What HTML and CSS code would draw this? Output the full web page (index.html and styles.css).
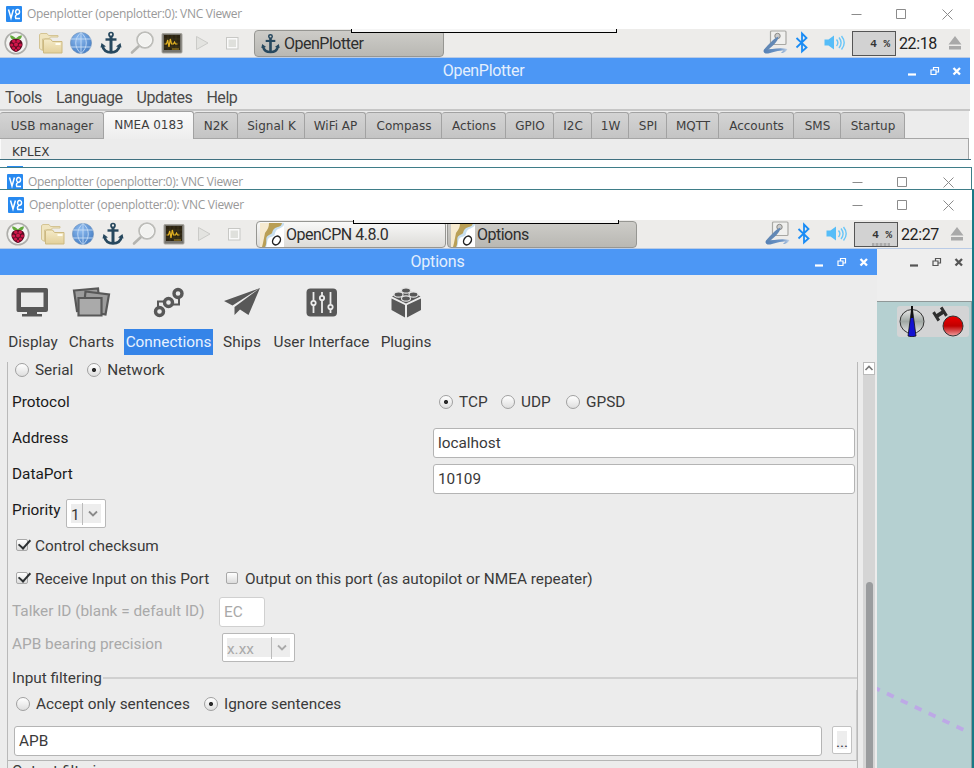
FILE: index.html
```html
<!DOCTYPE html>
<html lang="en">
<head>
<meta charset="utf-8">
<title>Openplotter</title>
<link rel="stylesheet" href="styles.css">
</head>
<body>
<svg class="defs" width="0" height="0">
  <defs>
    <linearGradient id="gFold" x1="0" y1="0" x2="0" y2="1"><stop offset="0" stop-color="#f5ebc9"/><stop offset="1" stop-color="#e3d09a"/></linearGradient>
    <radialGradient id="gGlobe" cx=".4" cy=".3" r=".8"><stop offset="0" stop-color="#8fbcf0"/><stop offset="1" stop-color="#3f78c0"/></radialGradient>
    <linearGradient id="gRed" x1="0" y1="0" x2="0" y2="1"><stop offset="0" stop-color="#e00"/><stop offset=".5" stop-color="#c00000"/><stop offset="1" stop-color="#f0a0a0"/></linearGradient>
    <linearGradient id="gDial" x1="0" y1="0" x2="0" y2="1"><stop offset="0" stop-color="#e8e8e8"/><stop offset=".5" stop-color="#a0a8a4"/><stop offset="1" stop-color="#e8e8e8"/></linearGradient>
    <linearGradient id="gSwoop" x1="0" y1="0" x2="1" y2="0"><stop offset="0" stop-color="#5580b4"/><stop offset=".7" stop-color="#6f97c8"/><stop offset="1" stop-color="#c4d4e8"/></linearGradient>
  </defs>
  <symbol id="vnc" viewBox="0 0 16 16"><rect width="16" height="16" rx="1" fill="#2789f0"/><path d="M2.500 3.500 5 12l2.400-8.500M14 12.500H9.800C9 10 9.600 9 11.500 8.400M12 8.200c2-.7 2.200-4 .2-4.600-2.200-.5-3 1.500-2.300 3.400.4 1 1.300 1.400 2.100 1.200Z" fill="none" stroke="#fff" stroke-width="1.500"/></symbol>
  <symbol id="rasp" viewBox="0 0 24 28"><circle cx="12" cy="14" r="10.800" fill="#f4f4f2" stroke="#aeaeaa" stroke-width="1.600"/><path d="M12 9.500C9 6 6 6.500 6 6.500c.2 3.500 3 4.700 6 4 3 .7 5.800-.5 6-4 0 0-3-.5-6 3Z" fill="#63a83c"/><path d="M12 10c4-.5 6.800 2 6.600 5.500C18.300 19.500 14.500 22.700 12 23 9.500 22.700 5.700 19.500 5.400 15.500 5.200 12 8 9.500 12 10Z" fill="#5c0c24"/><g fill="#d2164a"><circle cx="9.800" cy="12.200" r="1.700"/><circle cx="14.200" cy="12.200" r="1.700"/><circle cx="12" cy="15.500" r="2"/><circle cx="7.700" cy="16" r="1.600"/><circle cx="16.300" cy="16" r="1.600"/><circle cx="9.600" cy="19" r="1.600"/><circle cx="14.400" cy="19" r="1.600"/><circle cx="12" cy="21" r="1.200"/></g></symbol>
  <symbol id="folders" viewBox="0 0 24 28"><path d="M.5 5.500v14l3 2V10h6l2-2H19V6.500H9.500L8 4.500H2Z" fill="#f0e5c0" stroke="#d4c494"/><path d="M4.500 24V11l1-1h6l2 2.500h9.500V24Z" fill="url(#gFold)" stroke="#cdb980"/><path d="M16.500 15h5" stroke="#fffdf0" stroke-width="2"/></symbol>
  <symbol id="globe" viewBox="0 0 24 28"><circle cx="12" cy="14" r="10.600" fill="url(#gGlobe)" stroke="#7393b8" stroke-width=".6"/><path d="M2 10h20M2 18h20M12 3.500v21M12 3.500c-7 6-7 15 0 21M12 3.500c7 6 7 15 0 21" fill="none" stroke="#c6dcf5" stroke-width=".9"/></symbol>
  <symbol id="anchor" viewBox="0 0 24 28"><g fill="none" stroke="#27485e"><circle cx="12" cy="5.500" r="2" stroke-width="1.700"/><path d="M12 7v16" stroke-width="3"/><path d="M6.500 10.500h11" stroke-width="2.400"/><path d="M3.500 17c1 4.500 4 6.300 8.500 6.300s7.500-1.800 8.500-6.300" stroke-width="2.800"/></g><path d="M1.500 18.500 2.500 14l4.500 3.500ZM22.500 18.500l-1-4.500-4.500 3.500Z" fill="#27485e"/></symbol>
  <symbol id="mag" viewBox="0 0 24 28"><path d="m9 17-7 6.500" stroke="#b4b4b0" stroke-width="2.600" stroke-linecap="round"/><circle cx="15" cy="11" r="7.800" fill="#f2f2f0" stroke="#bdbdb9" stroke-width="2"/><circle cx="15" cy="11" r="6.600" fill="none" stroke="#fff" stroke-width=".7"/></symbol>
  <symbol id="mon" viewBox="0 0 24 28"><rect x="2" y="4.500" width="20" height="19.500" rx="1" fill="#77756e" stroke="#a7a59e"/><rect x="4" y="6" width="16" height="15" fill="#2c2412"/><path d="M4 10h16M4 14h16M4 18h16M8 6v15M12 6v15M16 6v15" stroke="#4a4020" stroke-width=".5"/><path d="M4.500 15h2l1.200-4 1.300 7 1.300-8 1.200 5h2l1-2 1 2h2" fill="none" stroke="#e6b422" stroke-width="1.200"/><path d="M12 20h7" stroke="#b08c20"/></symbol>
  <symbol id="play" viewBox="0 0 24 28"><path d="M6.500 7.500v13L18 14Z" fill="#e3e3e0" stroke="#cbcbc8"/></symbol>
  <symbol id="stop" viewBox="0 0 24 28"><rect x="6.500" y="8.500" width="11.500" height="11.500" fill="#fafafa" stroke="#c8c8c5"/><rect x="8.500" y="10.500" width="7.500" height="7.500" fill="#dfe0dc"/></symbol>
  <symbol id="tool" viewBox="0 0 26 28"><rect x="8.500" y="2" width="15.500" height="13.500" rx="1" fill="#f0f0ee" stroke="#a8a8a4" stroke-width="1.200"/><circle cx="15.500" cy="7" r="2.700" fill="#ccc" stroke="#8a8a86"/><path d="M16.500 7.500C11 10 7 15 2 20.500L4 22.500C10 17.500 16 13 16.500 7.500Z" fill="#6288b5"/><path d="M2 20.500C9 20.500 18 18 25.500 20c-1.500 3-4.500 4.500-6.500 4l2.500-2.500C14 21 9 25 3.500 24.500c-2-.8-2.500-2.500-1.500-4Z" fill="url(#gSwoop)"/></symbol>
  <symbol id="bt" viewBox="0 0 14 28"><path d="m1.500 9 10 9.500L7 22.500v-18l4.500 4.500-10 9.500" fill="none" stroke="#1a8cf5" stroke-width="1.800"/></symbol>
  <symbol id="spk" viewBox="0 0 22 28"><path d="M.5 10.500h4L10 6.500v14l-5.500-4h-4Z" fill="#56bdf8"/><path d="M12.500 10.500c1.700 2 1.700 4.500 0 6.500M15 8.500c2.800 3.500 2.800 7 0 10.500M17.500 7c3.600 4.500 3.600 9 0 13.500" fill="none" stroke="#6ac6f8" stroke-width="1.400"/></symbol>
  <symbol id="eject" viewBox="0 0 14 28"><path d="m7 7 6.500 8.500H.5Z M1 17h12v3.500H1Z" fill="#a9a9a9"/></symbol>
  <symbol id="ocpn" viewBox="0 0 24 24"><rect width="24" height="24" fill="#fff"/><path d="M0 0h24v2c-3 4-6 3-8 6s0 5-5 6-3 6-5 10H2L0 12Z" fill="#c8dff0"/><path d="M0 0h22c-1 5-5 3-8 6s0 4-5 6-1 7-4 12H2L0 12Z" fill="#b99f56"/><path d="M0 0h9c0 4-1 6-4 10L3 20l-1 4H0Z" fill="#f6ead0"/><ellipse cx="16.500" cy="17.500" rx="3.600" ry="4.700" transform="rotate(32 16.500 17.500)" fill="#fff" stroke="#222" stroke-width="1.500"/></symbol>
  <symbol id="ctl" viewBox="0 0 56 12"><path d="M1 9.500h8" stroke="currentColor" stroke-width="2.200"/><path d="M26.500 5V2.500h5V7h-2M24 5h5v4.500h-5Z" fill="none" stroke="currentColor" stroke-width="1.200"/><path d="m46.500 3 6.500 6.500M53 3 46.500 9.500" stroke="currentColor" stroke-width="2.300"/></symbol>
  <symbol id="wbtn" viewBox="0 0 102 12"><path d="M.5 6.500h10M45.500 1.500h9v9h-9ZM91.500 1.500l10 10M101.500 1.500l-10 10" fill="none" stroke="#8b8b8b"/></symbol>
</svg>

<section class="win win-a">
  <header class="vnc-title"><svg width="16" height="16"><use href="#vnc"/></svg><span>Openplotter (openplotter:0): VNC Viewer</span><svg class="wbtns"><use href="#wbtn"/></svg></header>
  <div class="taskbar">
    <div class="launch"><svg><use href="#rasp"/></svg><svg><use href="#folders"/></svg><svg><use href="#globe"/></svg><svg><use href="#anchor"/></svg><svg><use href="#mag"/></svg><svg><use href="#mon"/></svg><svg><use href="#play"/></svg><svg><use href="#stop"/></svg></div>
    <div class="task on"><svg class="anc"><use href="#anchor"/></svg><span>OpenPlotter</span></div>
    <div class="notch"></div>
    <div class="tray"><svg class="t-tool"><use href="#tool"/></svg><svg class="t-bt"><use href="#bt"/></svg><svg class="t-spk"><use href="#spk"/></svg><div class="cpu">4 %</div><span class="clock">22:18</span><svg class="t-ej"><use href="#eject"/></svg></div>
  </div>
  <div class="bluebar"><span>OpenPlotter</span><svg class="ctl"><use href="#ctl"/></svg></div>
  <nav class="menu"><span>Tools</span><span>Language</span><span>Updates</span><span>Help</span></nav>
  <div class="tabs">
    <div class="tab w104">USB manager</div><div class="tab w90 active">NMEA 0183</div><div class="tab w44">N2K</div><div class="tab w67">Signal K</div><div class="tab w61">WiFi AP</div><div class="tab w76">Compass</div><div class="tab w64">Actions</div><div class="tab w48">GPIO</div><div class="tab w38">I2C</div><div class="tab w37">1W</div><div class="tab w38">SPI</div><div class="tab w52">MQTT</div><div class="tab w75">Accounts</div><div class="tab w47">SMS</div><div class="tab w64">Startup</div>
  </div>
  <div class="kplex">KPLEX</div>
</section>

<div class="sliver"><i></i></div>

<section class="win win-b">
  <header class="vnc-title"><svg width="16" height="16"><use href="#vnc"/></svg><span>Openplotter (openplotter:0): VNC Viewer</span><svg class="wbtns"><use href="#wbtn"/></svg></header>
</section>

<section class="win win-c">
  <header class="vnc-title"><svg width="16" height="16"><use href="#vnc"/></svg><span>Openplotter (openplotter:0): VNC Viewer</span><svg class="wbtns"><use href="#wbtn"/></svg></header>
  <div class="taskbar">
    <div class="launch"><svg><use href="#rasp"/></svg><svg><use href="#folders"/></svg><svg><use href="#globe"/></svg><svg><use href="#anchor"/></svg><svg><use href="#mag"/></svg><svg><use href="#mon"/></svg><svg><use href="#play"/></svg><svg><use href="#stop"/></svg></div>
    <div class="task"><svg class="oc"><use href="#ocpn"/></svg><span>OpenCPN 4.8.0</span></div>
    <div class="task on"><svg class="oc"><use href="#ocpn"/></svg><span>Options</span></div>
    <div class="notch"></div>
    <div class="tray"><svg class="t-tool"><use href="#tool"/></svg><svg class="t-bt"><use href="#bt"/></svg><svg class="t-spk"><use href="#spk"/></svg><div class="cpu busy">4 %</div><span class="clock">22:27</span><svg class="t-ej"><use href="#eject"/></svg></div>
  </div>
  <div class="body">
    <div class="options">
      <div class="bluebar"><span>Options</span><svg class="ctl"><use href="#ctl"/></svg></div>
      <div class="tools">
        <div class="tool"><svg viewBox="0 0 40 36"><path d="M5.500 4h27A2 2 0 0 1 35 6v20a2 2 0 0 1-2 2h-27A2 2 0 0 1 3.500 26V6a2 2 0 0 1 2-2ZM8 8.500v14.500h22.500V8.500Z" fill="#585858" fill-rule="evenodd"/><path d="M14 28h10v2h5v2.500H9V30h5Z" fill="#585858"/></svg><span>Display</span></div>
        <div class="tool"><svg viewBox="0 0 40 36"><g fill="#9c9c9c" stroke="#585858" stroke-width="2.200"><path d="m2 6.500 24-2 2 20-23 2.500Z"/><path d="m13.500 7.500 23.500 3-3.500 20-22-4Z"/><path d="M6.500 14h23v17.500h-23Z" fill="#aaa"/></g></svg><span>Charts</span></div>
        <div class="tool sel"><svg viewBox="0 0 40 36"><g fill="none" stroke="#585858" stroke-width="3.400"><circle cx="10.500" cy="27.500" r="4"/><circle cx="19.500" cy="18.500" r="4"/><circle cx="29" cy="9.500" r="4"/></g><path d="M9 23v-5.500h7M24 20.500h6v-7" fill="none" stroke="#585858" stroke-width="2"/></svg><span>Connections</span></div>
        <div class="tool"><svg viewBox="0 0 40 36"><path d="M38 4 2 17l8.500 4.500ZM38 4 12.500 23v8l5.500-5.500 8.500 5.500Z" fill="#585858"/></svg><span>Ships</span></div>
        <div class="tool"><svg viewBox="0 0 40 36"><rect x="4.500" y="4.500" width="30.500" height="28" rx="4" fill="#585858"/><g stroke="#ececec" stroke-width="1.800" fill="#585858"><path d="M11.500 8v21M20 8v21M28.500 8v21"/><circle cx="11.500" cy="19" r="2.200"/><circle cx="20" cy="14" r="2.200"/><circle cx="28.500" cy="23" r="2.200"/></g></svg><span>User Interface</span></div>
        <div class="tool"><svg viewBox="0 0 40 36"><path d="M5.500 14.500 19 21v12.500L5.500 26ZM35 14.500 21 21v12.500L35 26Z" fill="#585858"/><path d="m6 12.500 14-7.500 14.500 7.500L20 19.500Z" fill="#585858"/><g fill="#585858" stroke="#e4e4e4" stroke-width="1.100"><ellipse cx="20" cy="6.500" rx="4.500" ry="2.600"/><ellipse cx="12.500" cy="10.500" rx="4.500" ry="2.600"/><ellipse cx="27.500" cy="10.500" rx="4.500" ry="2.600"/><ellipse cx="20" cy="14.500" rx="4.500" ry="2.600"/></g></svg><span>Plugins</span></div>
      </div>
      <div class="scroller">
        <form class="form">
          <div class="row r-type"><i class="radio"></i><span>Serial</span><i class="radio on g1"></i><span>Network</span></div>
          <div class="row r-proto"><label>Protocol</label><i class="radio on"></i><span class="wtcp">TCP</span><i class="radio"></i><span class="wudp">UDP</span><i class="radio"></i><span>GPSD</span></div>
          <div class="row r-field"><label>Address</label><div class="input">localhost</div></div>
          <div class="row r-field"><label>DataPort</label><div class="input">10109</div></div>
          <div class="row r-prio"><label>Priority</label><div class="combo small"><b>1</b><svg viewBox="0 0 10 8"><path d="m1 1.500 4 4 4-4" fill="none" stroke="#8a8a8a" stroke-width="1.800"/></svg></div></div>
          <div class="row r-check"><i class="check on"></i><span>Control checksum</span></div>
          <div class="row r-recv"><i class="check on"></i><span class="wrecv">Receive Input on this Port</span><i class="check"></i><span>Output on this port (as autopilot or NMEA repeater)</span></div>
          <div class="row r-talk dim"><label>Talker ID (blank = default ID)</label><div class="input">EC</div></div>
          <div class="row r-apb dim"><label>APB bearing precision</label><div class="combo"><b>x.xx</b><svg viewBox="0 0 10 8"><path d="m1 1.500 4 4 4-4" fill="none" stroke="#aaa" stroke-width="1.800"/></svg></div></div>
          <div class="group">
            <div class="legend"><span>Input filtering</span></div>
            <div class="gbody">
              <div class="row r-filt"><i class="radio"></i><span class="wacc">Accept only sentences</span><i class="radio on"></i><span>Ignore sentences</span></div>
              <div class="row r-apbin"><div class="input">APB</div><div class="more">...</div></div>
            </div>
          </div>
          <div class="row r-out">Output filtering</div>
        </form>
        <div class="bar"><svg viewBox="0 0 12 13"><rect x=".5" y=".5" width="11" height="12" fill="#fff" stroke="#bbb"/><path d="m2.500 8 3.500-3.500L9.500 8" fill="none" stroke="#777" stroke-width="1.600"/></svg><div class="thumb"></div></div>
      </div>
    </div>
    <div class="chart">
      <div class="chart-head"><svg class="ctl"><use href="#ctl"/></svg></div>
      <div class="sea">
        <svg class="gauge" viewBox="0 0 72 31"><rect width="72" height="31" rx="3" fill="#d3d4d5"/><circle cx="15" cy="15.500" r="12" fill="url(#gDial)" stroke="#333"/><path d="M15 0 11 30q4 1.500 8 0Z" fill="#1212d0" stroke="#111" stroke-width=".8"/><path d="M15 0v12" stroke="#111" stroke-width="2"/><g transform="rotate(-32 43 8)" fill="#2f2f2f"><path d="M37 3h3v3h6V3h3v10h-3v-3h-6v3h-3Z"/></g><circle cx="56" cy="20" r="10" fill="url(#gRed)" stroke="#333"/></svg>
        <svg class="route" viewBox="0 0 94 50"><path d="M-4 0 88 43.500" fill="none" stroke="#bda9e6" stroke-width="3.800" stroke-dasharray="7.500 7.900"/></svg>
      </div>
    </div>
  </div>
</section>
</body>
</html>
```
FILE: styles.css
```css
* { box-sizing: border-box; }
body { margin: 0; width: 974px; height: 768px; overflow: hidden; background: #fff; font: 15.35px/18px Roboto, sans-serif; color: #3a3a3a; }
svg { display: block; flex: none; }
.defs { position: absolute; }
i, b { font-style: normal; font-weight: 400; }
span, label { white-space: nowrap; }

.vnc-title { display: flex; align-items: center; padding: 0 0 2px 6px; height: 29px; background: #fff; font: 12px/16px "Open Sans", sans-serif; letter-spacing: -.29px; color: #999; }
.vnc-title span { margin-left: 5px; }
.wbtns { width: 102px; height: 12px; margin-left: auto; margin-right: 18px; }

.taskbar { position: relative; display: flex; height: 29px; background: #edecea; border-bottom: 1px solid #b9cbe6; }
.launch { display: flex; width: 254px; padding-left: 4px; }
.launch svg { width: 24px; height: 28px; margin-right: 6.2px; }
.launch svg:first-child { margin-right: 11px; }
.task { display: flex; align-items: center; width: 190px; height: 27px; margin-top: 1px; padding-left: 5px; border: 1px solid #969692; border-radius: 4px; background: linear-gradient(#f9f9f8, #dcdbd8); font-size: 16px; letter-spacing: -.5px; color: #2e2e2e; }
.task.on { background: linear-gradient(#cdccc8, #b9b8b3); }
.anc { width: 21px; height: 26px; }
.oc { width: 24px; height: 24px; }
.anc + span { margin-left: 3px; }
.oc + span { margin-left: 2px; }
.notch { position: absolute; left: 351px; top: 0; width: 266px; height: 4px; background: #f6f6f6; border: solid #000; border-width: 0 1px 1px; }
.tray { display: flex; width: 208px; margin-left: auto; }
.t-tool { width: 26px; height: 28px; margin-right: 7px; }
.t-bt { width: 14px; height: 28px; margin-right: 15px; }
.t-spk { width: 22px; height: 28px; margin-right: 6px; }
.cpu { width: 44px; height: 25px; margin-top: 2px; padding-right: 5px; border: 1px solid #555; background: #d2d2d2; font: bold 11px/24px "Liberation Mono", monospace; text-align: right; color: #333; }
.cpu.busy { background: repeating-linear-gradient(90deg, #aaa 0 2px, #c2c2c2 2px 4px) 17px 100% / 18px 3px no-repeat #d2d2d2; }
.clock { width: 52px; padding-left: 3px; font-size: 16px; line-height: 29px; letter-spacing: -.4px; color: #222; }
.t-ej { width: 14px; height: 28px; }

.bluebar { position: relative; display: flex; justify-content: center; height: 26px; background: #4c97f5; color: #e4effd; font-size: 16px; line-height: 26px; letter-spacing: -.35px; }
.ctl { width: 56px; height: 12px; }
.bluebar .ctl { position: absolute; right: 7px; top: 7px; color: #fff; }

.win-a { width: 971px; height: 160px; border-bottom: 1px solid #3f7080; }
.win-a .taskbar, .win-a .bluebar, .win-a .menu { width: 970px; }
.win-a .bluebar { padding-right: 3px; letter-spacing: -.3px; }
.menu { display: flex; gap: 14px; height: 27px; padding: 4px 0 0 5px; background: #ececec; border-bottom: 2px solid #c6c6c6; font-size: 16px; line-height: 19px; letter-spacing: -.45px; color: #4a4a4a; }
.tabs { display: flex; align-items: flex-end; width: 969px; height: 28px; background: #ececec; border-bottom: 1px solid #a6a6a6; }
.tab { height: 26px; border: solid #a2a2a2; border-width: 1px 1px 0 0; border-radius: 3px 3px 0 0; background: linear-gradient(#d4d4d4, #c4c4c4); font: 12px/27px "DejaVu Sans", sans-serif; text-align: center; white-space: nowrap; padding-left: 1px; color: #3e3e3e; }
.tab.active { height: 28px; margin-bottom: -1px; background: linear-gradient(#fbfbfb, #ededed); }
.w104 { width: 104px; } .w90 { width: 90px; } .w44 { width: 44px; } .w67 { width: 67px; } .w61 { width: 61px; }
.w76 { width: 76px; } .w64 { width: 64px; } .w48 { width: 48px; } .w38 { width: 38px; } .w37 { width: 37px; }
.w52 { width: 52px; } .w75 { width: 75px; } .w47 { width: 47px; }
.kplex { width: 969px; height: 20px; padding: 4px 0 0 11px; background: #ececec; border-left: 1px solid #fafafa; border-right: 1px solid #a6a6a6; font: 12px/19px "DejaVu Sans", sans-serif; }

.sliver { height: 7px; padding: 6px 0 0 7px; }
.sliver i { display: block; width: 16px; height: 1px; background: #2789f0; }
.win-b { width: 972px; height: 22px; border: 1px solid #3f7d88; border-width: 1px 1px 0 0; overflow: hidden; }
.win-b .vnc-title { padding-left: 7px; }
.win-b .wbtns { margin-right: 17px; }
.win-c { width: 974px; border-top: 1px solid #3f7d88; background: #197a86; }
.win-c .vnc-title { width: 972px; height: 30px; padding-left: 8px; padding-bottom: 1px; }
.win-c .taskbar { width: 972px; }
.win-c .launch { width: 256px; padding-left: 6px; }
.win-c .task { margin-right: 1px; padding-left: 3px; }
.win-c .notch { left: 353px; }

.body { display: flex; height: 519px; }
.options { width: 877px; background: #ececec; }
.body .bluebar { padding-right: 2px; letter-spacing: -.2px; }
.tools { display: grid; grid-template-columns: 58px 59px 95px 52px 107px 62px; height: 87px; padding: 9px 0 0 4px; }
.tool { display: flex; flex-direction: column; align-items: center; }
.tool svg { width: 40px; height: 36px; }
.tool span { margin-top: 9px; height: 26px; line-height: 26px; padding: 0 2px; }
.tool.sel span { background: #3584e8; color: #e8f2ff; }
.scroller { display: flex; height: 406px; overflow: hidden; padding-left: 7px; }
.form { width: 851px; height: 440px; border: solid #b9b9b9; border-width: 0 1px; }
.row { display: flex; align-items: center; }
.form label { color: #1a1a1a; }
.radio { flex: none; width: 14px; height: 14px; margin-right: 6px; border: 1px solid #a0a0a0; border-radius: 50%; background: linear-gradient(#fff, #dedede); }
.radio.on { background: radial-gradient(circle at center, #2b2b2b 0 1.700px, transparent 2.400px), linear-gradient(#fff, #dedede); }
.check { position: relative; flex: none; width: 12px; height: 12px; margin: -2px 7px 0 0; border: 1px solid #a8a8a8; border-radius: 2px; background: linear-gradient(#fff, #dcdcdc); }
.check.on { margin-left: -1px; }
.check.on::after { content: ""; position: absolute; left: 4px; top: -3px; width: 5px; height: 10px; border: solid #2c3032; border-width: 0 2.500px 2.500px 0; transform: rotate(42deg); }
.input { height: 30px; padding: 0 4px; border: 1px solid #b4b4b4; border-radius: 3px; background: #fff; line-height: 29px; }
.r-type { height: 16px; padding-left: 7px; }
.r-type .g1 { margin-left: 14px; }
.r-proto { height: 47px; padding: 1px 0 0 4px; }
.r-proto label { width: 427px; margin-bottom: 1px; }
.wtcp { width: 42px; } .wudp { width: 45px; }
.r-field { height: 36px; padding-left: 4px; }
.r-field label { width: 421px; margin-bottom: 10px; }
.r-field .input { width: 422px; }
.r-prio { height: 33px; padding-left: 4px; }
.r-prio label { width: 54px; margin-bottom: 7px; }
.combo { display: flex; align-items: center; width: 73px; height: 29px; border: 1px solid #b8b8b8; border-radius: 2px; background: linear-gradient(#ededed, #ededed) center / calc(100% - 8px) calc(100% - 8px) no-repeat #fff; }
.combo b { width: 49px; height: 22px; padding-left: 4px; line-height: 24px; border-right: 1px solid #bbb; }
.combo svg { width: 10px; height: 8px; margin-left: 5px; }
.combo.small { width: 40px; }
.combo.small b { width: 16px; }
.r-check { height: 32px; padding-left: 9px; }
.r-recv { height: 33px; padding-left: 9px; }
.wrecv { width: 191px; }
.dim, .form .dim label { color: #a9a9a9; }
.r-talk { height: 34px; padding-left: 4px; }
.r-talk label { width: 207px; margin-bottom: 3px; }
.r-talk .input { width: 46px; border-color: #d0d0d0; }
.r-apb { height: 37px; padding-left: 4px; }
.r-apb label { width: 210px; margin-bottom: 7px; }
.group { height: 95px; }
.legend { display: flex; align-items: center; height: 24px; padding-left: 4px; }
.legend::after { content: ""; flex: 1; height: 2px; margin-left: 1px; background: #d0d0d0; }
.gbody { height: 71px; border-bottom: 1px solid #b5b5b5; border-right: 1px solid #ccc; }
.r-filt { height: 30px; padding: 0 0 2px 8px; }
.wacc { width: 168px; }
.r-apbin { align-items: flex-start; height: 40px; padding: 6px 0 0 6px; }
.r-apbin .input { width: 808px; }
.more { width: 20px; height: 28px; margin-left: 10px; border: 1px solid #c2c2c2; border-radius: 2px; background: linear-gradient(#ededed, #ededed) center / 10px 18px no-repeat #fff; line-height: 30px; text-align: center; color: #334; }
.r-out { padding: 1px 0 0 4px; }
.bar { width: 12px; height: 406px; margin-left: 5px; background: #d5d5d5; }
.bar svg { width: 12px; height: 13px; }
.thumb { width: 7px; height: 240px; margin: 207px 0 0 3px; border-radius: 4px; background: #9a9c9e; }

.chart { width: 95px; background: #b5d0d1; }
.chart-head { display: flex; justify-content: flex-end; height: 53px; padding: 7px 7px 0 0; background: #eee; border-bottom: 1px solid #8f9898; color: #555; }
.sea { height: 466px; padding: 4px 0 0 20px; border-right: 1px solid #8b9c9e; overflow: hidden; }
.gauge { width: 72px; height: 31px; }
.route { width: 94px; height: 50px; margin: 350px 0 0 -20px; }
```
